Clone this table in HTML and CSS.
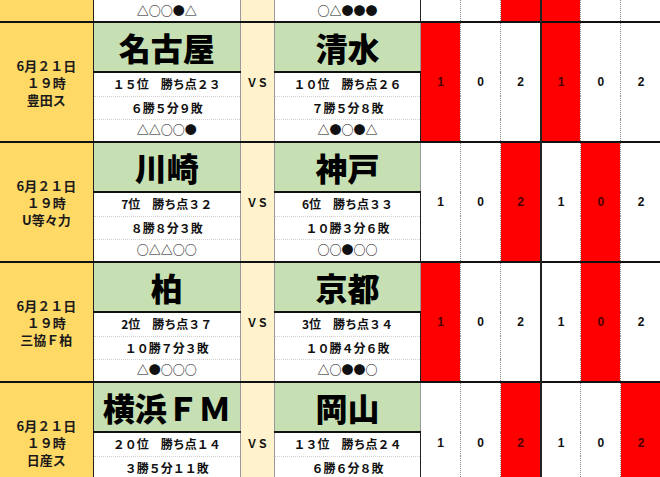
FILE: index.html
```html
<!DOCTYPE html>
<html lang="ja">
<head>
<meta charset="utf-8">
<title>試合予想</title>
<link rel="stylesheet" href="styles.css">
</head>
<body>
<table class="grid">
  <colgroup>
    <col class="c-date"><col class="c-team"><col class="c-vs"><col class="c-team2">
    <col class="c-res"><col class="c-res"><col class="c-res"><col class="c-res"><col class="c-res"><col class="c-res">
  </colgroup>
  <tr class="r-top">
    <td class="date"></td>
    <td class="stat last">△○○●△</td>
    <td class="vs"></td>
    <td class="stat last">○△●●●</td>
    <td class="res c1"></td><td class="res"></td><td class="res red"></td>
    <td class="res c4 red"></td><td class="res"></td><td class="res"></td>
  </tr>

  <tr class="r-name start">
    <td class="date" rowspan="4">6月２１日<br>１９時<br>豊田ス</td>
    <td class="name">名古屋</td>
    <td class="vs" rowspan="4">ＶＳ</td>
    <td class="name">清水</td>
    <td class="res c1 red" rowspan="4">1</td><td class="res" rowspan="4">0</td><td class="res" rowspan="4">2</td>
    <td class="res c4 red" rowspan="4">1</td><td class="res" rowspan="4">0</td><td class="res" rowspan="4">2</td>
  </tr>
  <tr class="r-s1"><td class="stat">１５位　勝ち点２３</td><td class="stat">１０位　勝ち点２６</td></tr>
  <tr class="r-s2"><td class="stat">６勝５分９敗</td><td class="stat">７勝５分８敗</td></tr>
  <tr class="r-s3"><td class="stat last">△△○○●</td><td class="stat last">△●○●△</td></tr>

  <tr class="r-name start">
    <td class="date" rowspan="4">6月２１日<br>１９時<br>U等々力</td>
    <td class="name">川崎</td>
    <td class="vs" rowspan="4">ＶＳ</td>
    <td class="name">神戸</td>
    <td class="res c1" rowspan="4">1</td><td class="res" rowspan="4">0</td><td class="res red" rowspan="4">2</td>
    <td class="res c4" rowspan="4">1</td><td class="res red" rowspan="4">0</td><td class="res" rowspan="4">2</td>
  </tr>
  <tr class="r-s1"><td class="stat">7位　勝ち点３２</td><td class="stat">6位　勝ち点３３</td></tr>
  <tr class="r-s2"><td class="stat">８勝８分３敗</td><td class="stat">１０勝３分６敗</td></tr>
  <tr class="r-s3"><td class="stat last">○△△○○</td><td class="stat last">○○●○○</td></tr>

  <tr class="r-name start">
    <td class="date" rowspan="4">6月２１日<br>１９時<br>三協Ｆ柏</td>
    <td class="name">柏</td>
    <td class="vs" rowspan="4">ＶＳ</td>
    <td class="name">京都</td>
    <td class="res c1 red" rowspan="4">1</td><td class="res" rowspan="4">0</td><td class="res" rowspan="4">2</td>
    <td class="res c4" rowspan="4">1</td><td class="res red" rowspan="4">0</td><td class="res" rowspan="4">2</td>
  </tr>
  <tr class="r-s1"><td class="stat">2位　勝ち点３７</td><td class="stat">3位　勝ち点３４</td></tr>
  <tr class="r-s2"><td class="stat">１０勝７分３敗</td><td class="stat">１０勝４分６敗</td></tr>
  <tr class="r-s3"><td class="stat last">△●○○○</td><td class="stat last">△○●●○</td></tr>

  <tr class="r-name start">
    <td class="date" rowspan="4">6月２１日<br>１９時<br>日産ス</td>
    <td class="name">横浜ＦＭ</td>
    <td class="vs" rowspan="4">ＶＳ</td>
    <td class="name">岡山</td>
    <td class="res c1" rowspan="4">1</td><td class="res" rowspan="4">0</td><td class="res red" rowspan="4">2</td>
    <td class="res c4" rowspan="4">1</td><td class="res" rowspan="4">0</td><td class="res red" rowspan="4">2</td>
  </tr>
  <tr class="r-s1"><td class="stat">２０位　勝ち点１４</td><td class="stat">１３位　勝ち点２４</td></tr>
  <tr class="r-s2"><td class="stat">３勝５分１１敗</td><td class="stat">６勝６分８敗</td></tr>
  <tr class="r-s3"><td class="stat last">&nbsp;</td><td class="stat last">&nbsp;</td></tr>
</table>
</body>
</html>
```

FILE: styles.css
```css
html, body {
  margin: 0;
  padding: 0;
  background: #fff;
  overflow: hidden;
}
body {
  width: 660px;
  height: 477px;
  font-family: "Noto Sans CJK JP", "Noto Sans", sans-serif;
  color: #111;
}
.grid {
  border-collapse: collapse;
  table-layout: fixed;
  width: 661px;
}
.c-date { width: 93px; }
.c-team { width: 147px; }
.c-vs { width: 34px; }
.c-team2 { width: 146px; }
.c-res { width: 40px; }

.grid td {
  padding: 0;
  text-align: center;
  vertical-align: middle;
  overflow: hidden;
  white-space: nowrap;
}
.r-top { height: 22px; }
.r-name { height: 49px; }
.r-s1 { height: 24px; }
.r-s2 { height: 23px; }
.r-s3 { height: 23px; }

.start td { border-top: 2px solid #111; }

.date {
  background: #FFD966;
  border-right: 1px solid #222;
  font-size: 13px;
  font-weight: 700;
  line-height: 17px;
  color: #1a1a1a;
}
.name {
  background: #C6E0B4;
  font-size: 32px;
  font-weight: 900;
  line-height: 48px;
  color: #000;
  border-bottom: 2px solid #111;
  border-right: 1px solid #999;
}
.vs {
  background: #FFF2CC;
  border-left: 1px solid #999;
  border-right: 1px solid #999;
  font-size: 11px;
  font-weight: 700;
  color: #111;
}
.stat {
  background: #fff;
  font-size: 12px;
  font-weight: 700;
  line-height: 14px;
  color: #111;
  border-bottom: 1px dotted #d0d0d0;
}
.stat.last { border-bottom: none; }
.res {
  background: #fff;
  font-family: "Liberation Sans", Arial, sans-serif;
  font-size: 12px;
  font-weight: 700;
  color: #111;
  border-left: 1px dotted #888;
}
.res.c1 { border-left: 1px solid #222; }
.res.c4 { border-left: 2px solid #222; }
.res.red {
  background: #FF0000;
  color: #4a0000;
}
```
